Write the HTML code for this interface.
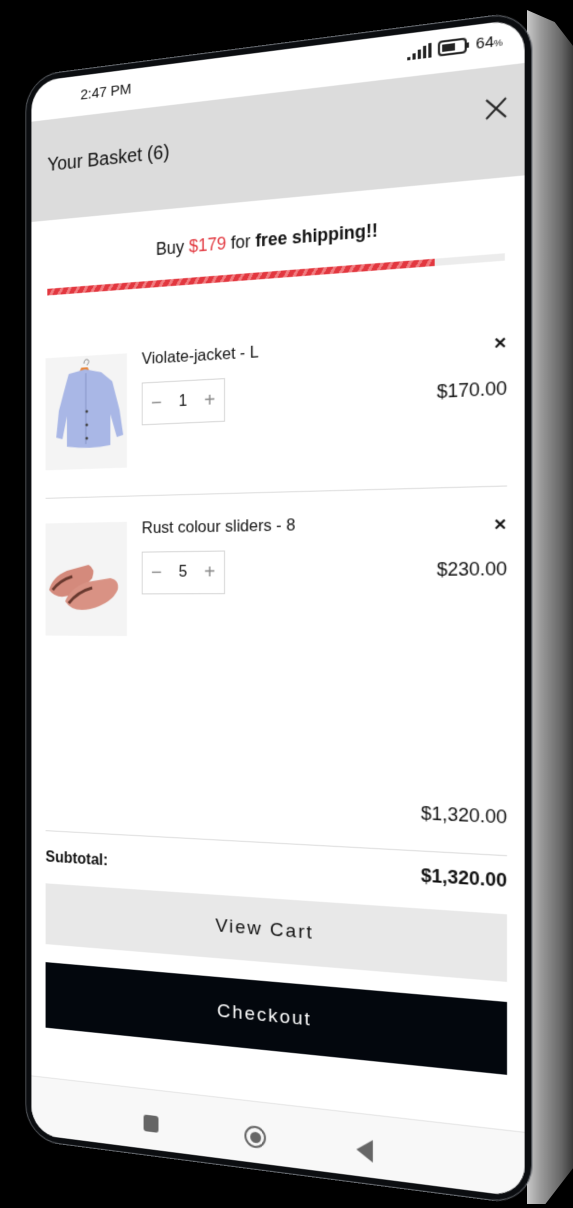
<!DOCTYPE html>
<html><head><meta charset="utf-8">
<style>
*{margin:0;padding:0;box-sizing:border-box}
html,body{width:573px;height:1208px;background:#000;overflow:hidden;font-family:"Liberation Sans",sans-serif;color:#111}
.shadow{position:absolute;left:527px;top:10px;width:46px;height:1194px;background:linear-gradient(to right,#c8c8c8 0%,#9a9a9a 30%,#666 75%,#3a3a3a 100%);clip-path:polygon(0 0,60% 1%,100% 3%,100% 97%,40% 100%,0 100%)}
.phone{position:absolute;left:14px;top:52px;width:500px;height:1112px;transform:perspective(800px) rotateY(-10.5deg);}
.frame{position:absolute;left:-7px;top:-7px;right:-7px;bottom:-7px;border-radius:38px;background:#0b0d10;border:1.5px solid #6b6f75}
.screen{position:absolute;inset:0;background:#fff;border-radius:30px;overflow:hidden}
.abs{position:absolute}
.status{top:0;left:0;right:0;height:42px}
.hdr{top:42px;left:0;right:0;height:106px;background:#dcdcdc}
.ttl{left:18px;top:79px;font-size:19.5px}
.close{right:14px;top:70px;width:24px;height:24px}
.ship{top:178px;left:0;right:0;text-align:center;font-size:17.5px}
.bar{top:220px;left:18px;right:18px;height:7px;background:#ececec}
.bar i{display:block;height:100%;width:86%;background:repeating-linear-gradient(-60deg,#e2373f 0 5px,#f17c80 5px 8px)}
.img{background:#f4f4f4;width:90px;height:118px;left:16px}
.name{left:122px;font-size:16.5px}
.qty{left:122px;width:88px;height:44px;border:1px solid #d4d4d4;display:flex;align-items:center;justify-content:space-around;font-size:16px}
.qty span{color:#888;font-size:20px;font-weight:300}
.price{right:16px;font-size:18px}
.rm{right:16px;font-size:15px;font-weight:bold}
.line{left:16px;right:16px;height:1px;background:#dcdcdc}
.btn{left:16px;right:16px;display:flex;align-items:center;justify-content:center;letter-spacing:2px;font-size:19px}
.nav{left:0;right:0;top:1050px;bottom:0;background:#f8f8f8;border-top:1px solid #e4e4e4}
</style></head><body>
<div class="shadow"></div>
<div class="phone">
<div class="frame"></div>
<div class="screen">
 <div class="abs status">
  <div class="abs" style="left:55px;top:12px;font-size:15px">2:47 PM</div>
  <div class="abs" style="right:20px;top:10px;display:flex;align-items:center;gap:5px;font-size:15px">
   <svg width="24" height="14" viewBox="0 0 24 14"><rect x="0" y="11" width="3" height="3" fill="#222"/><rect x="5" y="8" width="3" height="6" fill="#222"/><rect x="10" y="5" width="3" height="9" fill="#222"/><rect x="15" y="2" width="3" height="12" fill="#222"/><rect x="20" y="0" width="3" height="14" fill="#222"/></svg>
   <svg width="30" height="15" viewBox="0 0 30 15"><rect x="1" y="1" width="25" height="13" rx="3" fill="none" stroke="#222" stroke-width="2"/><rect x="4" y="4" width="12" height="7" fill="#222"/><rect x="27" y="5" width="2" height="5" fill="#222"/></svg>
   <span>64<small style="font-size:9px">%</small></span>
  </div>
 </div>
 <div class="abs hdr"></div>
 <div class="abs ttl">Your Basket (6)</div>
 <svg class="abs close" viewBox="0 0 24 24"><path d="M3 3L21 21M21 3L3 21" stroke="#222" stroke-width="1.8"/></svg>
 <div class="abs ship">Buy <span style="color:#e2373f">$179</span> for <b>free shipping!!</b></div>
 <div class="abs bar"><i></i></div>

 <div class="abs img" style="top:293px">
  <svg width="90" height="118" viewBox="0 0 90 118"><path d="M43 8q0-5 4-4q3 2-1 6" stroke="#888" fill="none"/><path d="M40 12l7 0l2 4l-11 0z" fill="#e8873c"/><path d="M26 18l18-4l18 4l12 10l8 30l4 26l-7 2l-7-24l0 32q-22 4-48 0l0-32l-5 24l-7-2l3-28l8-28z" fill="#a9b7e6"/><path d="M45 18l0 74" stroke="#8593c6"/><circle cx="46" cy="58" r="1.5" fill="#444"/><circle cx="46" cy="72" r="1.5" fill="#444"/><circle cx="46" cy="86" r="1.5" fill="#444"/></svg>
 </div>
 <div class="abs name" style="top:291px">Violate-jacket - L</div>
 <div class="abs rm" style="top:296px">✕</div>
 <div class="abs qty" style="top:324px"><span>−</span>1<span>+</span></div>
 <div class="abs price" style="top:338px">$170.00</div>
 <div class="abs line" style="top:440px"></div>

 <div class="abs img" style="top:467px">
  <svg width="90" height="118" viewBox="0 0 90 118"><path d="M4 70q4-14 20-20l24-6q8 4 4 14q-10 12-26 18q-14 4-22-6z" fill="#d48a7c"/><path d="M22 82q6-14 24-20l26-4q10 2 8 12q-6 14-30 20q-20 4-28-8z" fill="#d99284"/><path d="M8 70q8-10 22-14" stroke="#6a3a30" stroke-width="3" fill="none"/><path d="M26 84q10-12 26-16" stroke="#6a3a30" stroke-width="3" fill="none"/></svg>
 </div>
 <div class="abs name" style="top:465px">Rust colour sliders - 8</div>
 <div class="abs rm" style="top:468px">✕</div>
 <div class="abs qty" style="top:498px"><span>−</span>5<span>+</span></div>
 <div class="abs price" style="top:509px">$230.00</div>

 <div class="abs price" style="top:744px">$1,320.00</div>
 <div class="abs line" style="top:790px"></div>
 <div class="abs" style="left:16px;top:810px;font-size:16px;font-weight:bold">Subtotal:</div>
 <div class="abs price" style="top:804px;font-weight:bold">$1,320.00</div>
 <div class="abs btn" style="top:846px;height:64px;background:#e8e8e8">View Cart</div>
 <div class="abs btn" style="top:929px;height:69px;background:#03070d;color:#fff">Checkout</div>

 <div class="abs nav">
  <div class="abs" style="left:124px;top:26px;width:16px;height:17px;border-radius:3px;background:#666"></div>
  <div class="abs" style="left:230px;top:24px;width:22px;height:22px;border-radius:50%;border:2.5px solid #666;display:flex;align-items:center;justify-content:center"><div style="width:11px;height:11px;border-radius:50%;background:#666"></div></div>
  <svg class="abs" style="left:342px;top:24px" width="16" height="22" viewBox="0 0 16 22"><path d="M16 0L16 22L0 11z" fill="#666"/></svg>
 </div>
</div>
</div>
</body></html>
